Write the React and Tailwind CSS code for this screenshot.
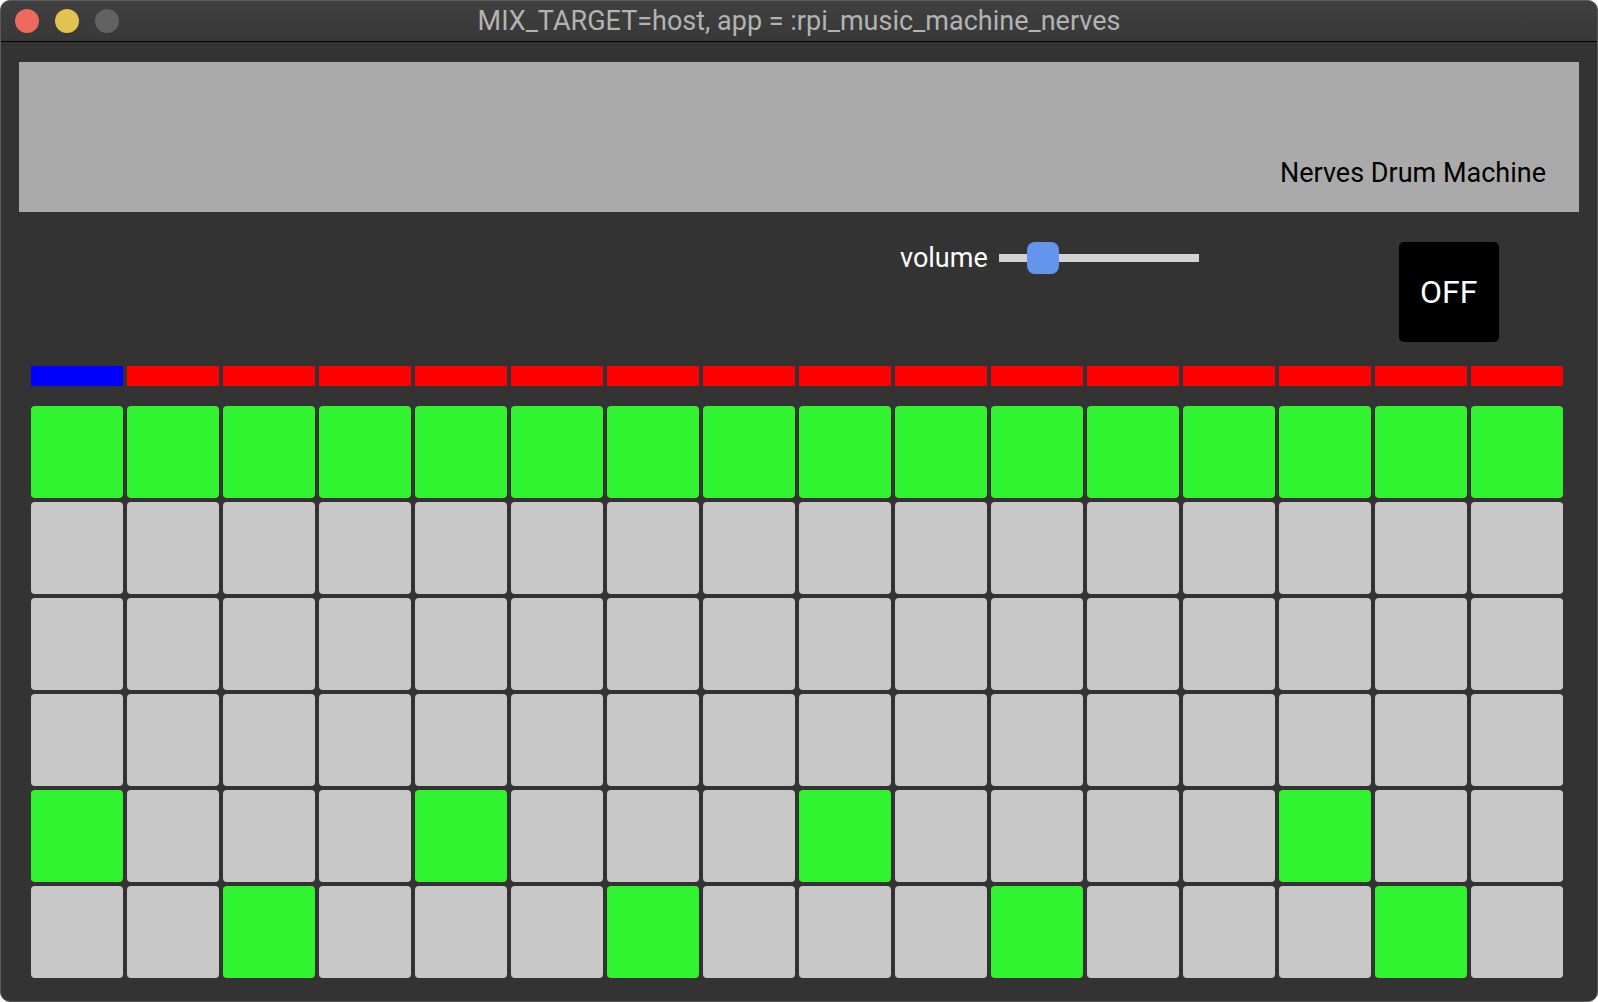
import React from "react"

const COLS = 16
const CURRENT_STEP = 0

// which steps are active for each track
const PATTERN = [
  [0, 1, 2, 3, 4, 5, 6, 7, 8, 9, 10, 11, 12, 13, 14, 15],
  [],
  [],
  [],
  [0, 4, 8, 13],
  [2, 6, 10, 14],
]

const TrafficLights = () => (
  <div className="absolute left-[14px] top-[8px] flex gap-[16px]">
    <span className="w-[24px] h-[24px] rounded-full bg-[#ee6a5f]" />
    <span className="w-[24px] h-[24px] rounded-full bg-[#e3c34f]" />
    <span className="w-[24px] h-[24px] rounded-full bg-[#626262]" />
  </div>
)

const VolumeSlider = ({ value = 0.14 }) => (
  <div className="flex items-center gap-[11px]">
    <span className="text-[27px] leading-[32px] text-white">volume</span>
    <div className="relative w-[200px] h-[32px] flex items-center">
      <div className="w-full h-[8px] bg-[#d3d3d3]" />
      <div
        className="absolute top-0 w-[32px] h-[32px] rounded-[8px] bg-[#6495ed]"
        style={{ left: `${value * 200}px` }}
      />
    </div>
  </div>
)

export default function App() {
  return (
    <div
      className="w-[1598px] h-[1002px] bg-[#333333] overflow-hidden rounded-[10px] border border-[#5a5a5a] flex flex-col"
      style={{ fontFamily: "Roboto, 'Noto Sans', sans-serif" }}
    >
      {/* Title bar */}
      <div className="relative h-[41px] shrink-0 bg-gradient-to-b from-[#404040] to-[#383838] border-b border-black flex items-center justify-center">
        <TrafficLights />
        <span className="text-[27px] leading-[32px] text-[#b3b3b3]">
          MIX_TARGET=host, app = :rpi_music_machine_nerves
        </span>
      </div>

      {/* Content */}
      <div className="flex flex-col pt-[20px]">
        {/* Header panel */}
        <div className="mx-[18px] h-[150px] bg-[#aaaaaa] flex items-end justify-end pr-[33px] pb-[23px]">
          <span className="text-[27px] leading-[32px] text-black">Nerves Drum Machine</span>
        </div>

        {/* Controls */}
        <div className="flex items-start mt-[30px] pl-[899px]">
          <VolumeSlider />
          <button className="ml-[200px] w-[100px] h-[100px] rounded-[5px] bg-black text-white text-[32px] flex items-center justify-center">
            OFF
          </button>
        </div>

        {/* Step indicator */}
        <div className="mt-[24px] ml-[30px] grid grid-cols-[repeat(16,92px)] gap-[4px]">
          {Array.from({ length: COLS }).map((_, i) => (
            <div
              key={i}
              className={i === CURRENT_STEP ? "h-[20px] bg-[#0000ff]" : "h-[20px] bg-[#ff0000]"}
            />
          ))}
        </div>

        {/* Sequencer grid */}
        <div className="mt-[20px] ml-[30px] grid grid-cols-[repeat(16,92px)] gap-[4px]">
          {PATTERN.map((track, r) =>
            Array.from({ length: COLS }).map((_, c) => (
              <div
                key={`${r}-${c}`}
                className={
                  track.includes(c)
                    ? "h-[92px] rounded-[4px] bg-[#31f431]"
                    : "h-[92px] rounded-[4px] bg-[#c8c8c8]"
                }
              />
            ))
          )}
        </div>
      </div>
    </div>
  )
}
